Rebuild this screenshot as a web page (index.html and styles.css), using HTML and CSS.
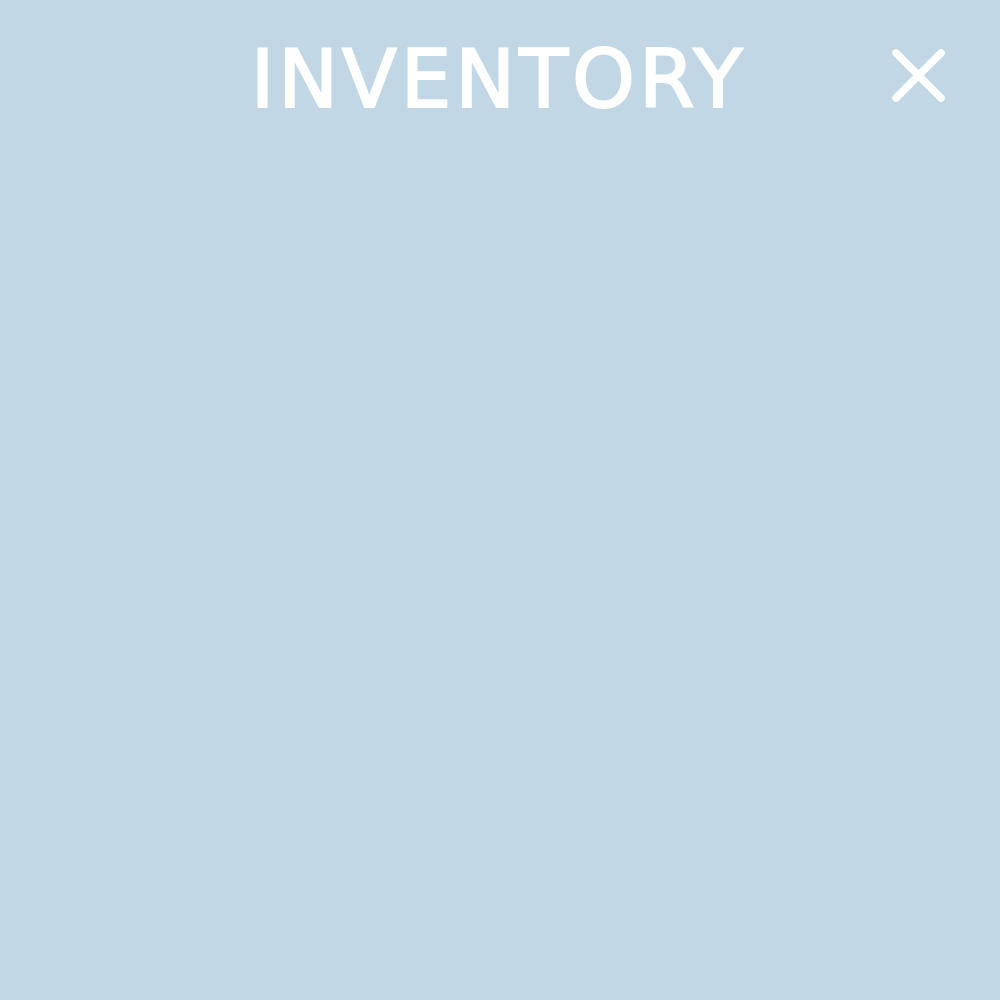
FILE: index.html
```html
<!DOCTYPE html>
<html lang="en">
<head>
<meta charset="utf-8">
<title>Inventory</title>
<link rel="stylesheet" href="styles.css">
</head>
<body>
<div class="screen">
  <header class="topbar">
    <div class="spacer"></div>
    <h1 class="title">INVENTORY</h1>
    <div class="actions">
      <button class="close" aria-label="Close">
        <svg width="58" height="60" viewBox="0 0 58 60" aria-hidden="true">
          <path d="M6 7 L51 52 M51 7 L6 52" stroke="#ffffff" stroke-width="7.5" stroke-linecap="round" fill="none"/>
        </svg>
      </button>
    </div>
  </header>
  <main class="content"></main>
</div>
</body>
</html>
```
FILE: styles.css
```css
html, body {
  margin: 0;
  padding: 0;
  height: 100%;
}
body {
  background: #c1d7e5;
  font-family: "DejaVu Sans", "Liberation Sans", sans-serif;
}
.screen {
  width: 1000px;
  height: 1000px;
  display: flex;
  flex-direction: column;
}
.topbar {
  display: grid;
  grid-template-columns: 1fr auto 1fr;
  align-items: start;
  height: 150px;
}
.title {
  margin: 0 3px 0 0;
  padding-top: 40px;
  color: #ffffff;
  font-size: 80px;
  font-weight: normal;
  -webkit-text-stroke: 2px #ffffff;
  line-height: 1;
  letter-spacing: 4px;
}
.actions {
  display: flex;
  justify-content: flex-end;
  padding-top: 46px;
  padding-right: 52px;
}
.close {
  background: none;
  border: 0;
  padding: 0;
  margin: 0;
  width: 58px;
  height: 60px;
  cursor: pointer;
  display: block;
}
.close svg {
  display: block;
  filter: blur(0.6px);
}
.content {
  flex: 1;
}
```
